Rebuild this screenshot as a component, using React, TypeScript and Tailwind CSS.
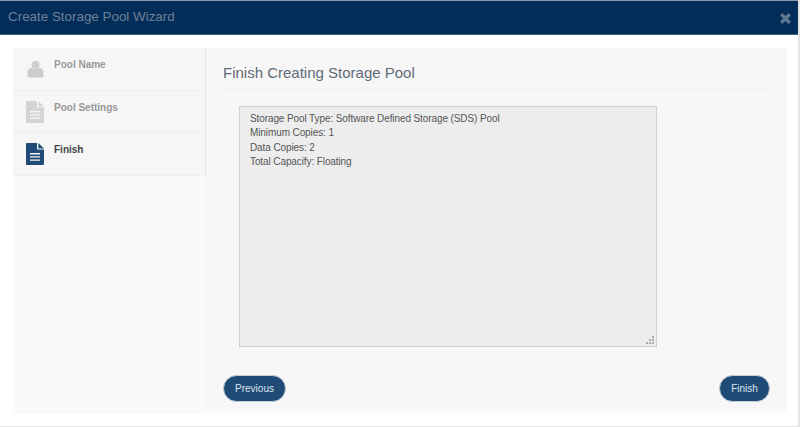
const UserIcon = ({ className }: { className: string }) => (
  <svg viewBox="0 0 18 18" className={className} fill="currentColor">
    <circle cx="9" cy="4.6" r="4.2" />
    <path d="M4.8 7.6C6 9.2 12 9.2 13.2 7.6 15.8 8.2 17.4 9.6 17.4 12.5V16.2C17.4 17.3 16.6 18 15.6 18H2.4C1.4 18 .6 17.3 .6 16.2V12.5C.6 9.6 2.2 8.2 4.8 7.6Z" />
  </svg>
);

const FileIcon = ({ className }: { className: string }) => (
  <svg viewBox="0 0 18 22" className={className} fill="currentColor">
    <path
      fillRule="evenodd"
      d="M.8 0H11V6.6H18V20.8C18 21.5 17.5 22 16.8 22H.8C.4 22 0 21.6 0 21V.9C0 .4.4 0 .8 0ZM4 10V11.4H14V10ZM4 13.2V14.6H14V13.2ZM4 16.4V17.8H14V16.4Z"
    />
    <path d="M12.4 0 18 5.4H12.4Z" />
  </svg>
);

const CloseIcon = () => (
  <svg viewBox="0 0 10 10" className="w-[11px] h-[11px] text-[#5f7690] mt-[1px]" fill="currentColor">
    <path d="M2.2 0 5 2.8 7.8 0 10 2.2 7.2 5 10 7.8 7.8 10 5 7.2 2.2 10 0 7.8 2.8 5 0 2.2Z" />
  </svg>
);

const steps = [
  { name: "Pool Name", icon: "user", active: false, h: "h-[43px]" },
  { name: "Pool Settings", icon: "file", active: false, h: "h-[42px]" },
  { name: "Finish", icon: "file", active: true, h: "h-[43px]" },
];

const App = () => {
  return (
    <div className="w-[800px] h-[427px] bg-white overflow-hidden flex flex-col font-['Liberation_Sans',Arial,sans-serif] border-r-2 border-b border-[#e4e4e4]">
      {/* Header */}
      <div className="h-[35px] shrink-0 bg-[#032d59] border-t border-t-[#8a98a8] border-b border-b-[#3f6285] flex items-center justify-between pl-2 pr-[7px]">
        <span className="text-[13.4px] text-[#6e8196]">Create Storage Pool Wizard</span>
        <CloseIcon />
      </div>

      {/* Wizard */}
      <div className="flex-1 flex pt-[13px] pl-[13px] pr-[11px] pb-3 bg-white">
        <div className="w-[193px] shrink-0 bg-[#fafafa] h-full">
          {steps.map((step) => (
            <div
              key={step.name}
              className={`${step.h} bg-[#f6f6f6] border-b border-[#efefef] border-r border-r-[#e6e6e6] flex pl-[13px] pt-[10px]`}
            >
              <div className="w-[18px] shrink-0 flex justify-center">
                {step.icon === "user" ? (
                  <UserIcon className="w-[17px] h-[18px] mt-[2px] text-[#cccccc]" />
                ) : (
                  <FileIcon
                    className={`w-[18px] h-[22px] ${step.active ? "text-[#214b77]" : "text-[#d4d4d4]"}`}
                  />
                )}
              </div>
              <span
                className={`ml-[10px] text-[10px] leading-[14px] font-bold ${
                  step.active ? "text-[#444444]" : "text-[#999999]"
                }`}
              >
                {step.name}
              </span>
            </div>
          ))}
        </div>

        <div className="flex-1 bg-[#fafafa] flex flex-col">
          <div className="flex-1 bg-[#f7f7f7] flex flex-col pl-[17px] pr-[17px] pb-[7px]">
            <div className="h-[42px] pt-[15px] border-b border-[#f0f0f0]">
              <h1 className="text-[15px] leading-[20px] text-[#5f6b78]">Finish Creating Storage Pool</h1>
            </div>
            <div className="relative ml-[16px] mt-[16px] w-[418px] h-[241px] bg-[#ededed] border border-[#cfcfcf] px-[10px] pt-[5px] text-[10px] leading-[14.3px] tracking-[-0.1px] text-[#555555]">
              <p>Storage Pool Type: Software Defined Storage (SDS) Pool</p>
              <p>Minimum Copies: 1</p>
              <p>Data Copies: 2</p>
              <p>Total Capacify: Floating</p>
              <svg viewBox="0 0 9 9" className="absolute right-[1px] bottom-[1px] w-[9px] h-[9px] text-[#aaaaaa]" fill="currentColor">
                <rect x="6" y="0" width="2" height="2" />
                <rect x="3" y="3" width="2" height="2" />
                <rect x="6" y="3" width="2" height="2" />
                <rect x="0" y="6" width="2" height="2" />
                <rect x="3" y="6" width="2" height="2" />
                <rect x="6" y="6" width="2" height="2" />
              </svg>
            </div>
            <div className="mt-auto flex justify-between">
              <button className="w-[63px] h-[27px] rounded-full bg-[#214b77] border border-[#c4ced8] text-[10px] text-[#dbe3ec]">
                Previous
              </button>
              <button className="w-[51px] h-[27px] rounded-full bg-[#214b77] border border-[#c4ced8] text-[10px] text-[#dbe3ec]">
                Finish
              </button>
            </div>
          </div>
          <div className="h-[5px] shrink-0" />
        </div>
      </div>
    </div>
  );
};

export default App;
